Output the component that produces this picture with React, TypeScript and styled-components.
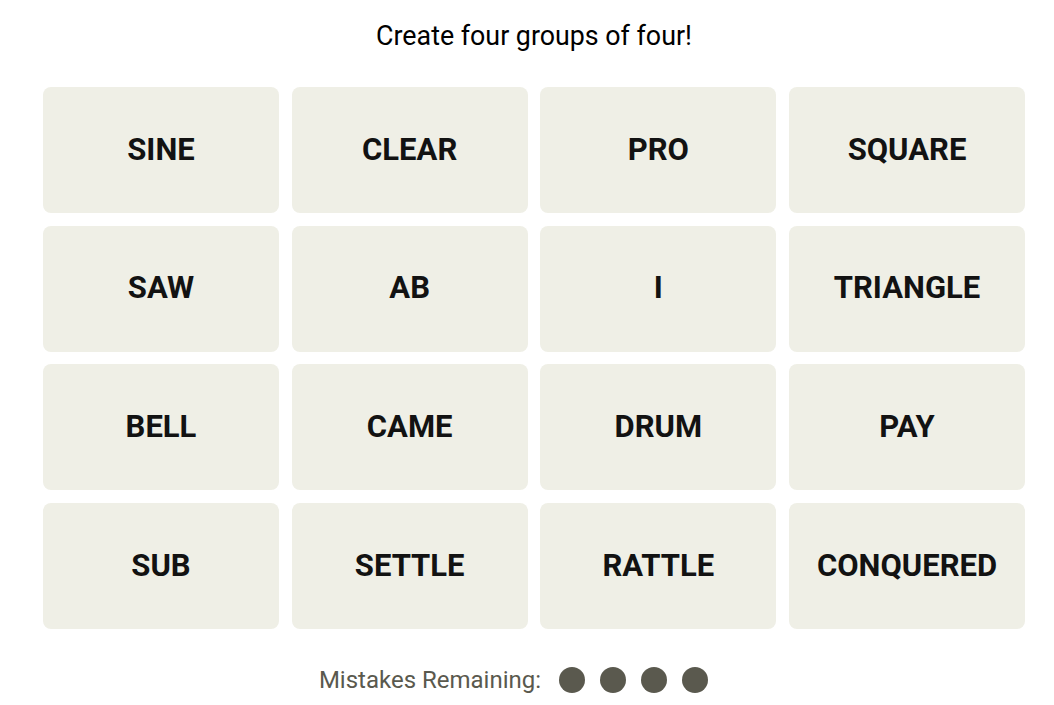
import { createGlobalStyle } from 'styled-components';
import styled from 'styled-components';

const GlobalStyle = createGlobalStyle`
  body {
    margin: 0;
    background: #ffffff;
    font-family: Roboto, "Liberation Sans", sans-serif;
    color: #121212;
  }
`;

const words = [
  'SINE', 'CLEAR', 'PRO', 'SQUARE',
  'SAW', 'AB', 'I', 'TRIANGLE',
  'BELL', 'CAME', 'DRUM', 'PAY',
  'SUB', 'SETTLE', 'RATTLE', 'CONQUERED',
];

const Board = styled.main`
  width: 982px;
  margin-left: 43px;
  display: flex;
  flex-direction: column;
  align-items: stretch;
`;

const Prompt = styled.p`
  margin: 21px 0 0;
  font-size: 26.8px;
  line-height: 30px;
  font-weight: 400;
  text-align: center;
  color: #000;
`;

const Grid = styled.section`
  margin-top: 36px;
  display: grid;
  grid-template-columns: repeat(4, 1fr);
  grid-auto-rows: 126px;
  gap: 12.7px;
`;

const Tile = styled.button`
  border: none;
  border-radius: 8px;
  background: #efefe6;
  color: #121212;
  font-family: Roboto, "Liberation Sans", sans-serif;
  font-size: 31px;
  font-weight: 700;
  text-transform: uppercase;
  display: flex;
  align-items: center;
  justify-content: center;
  padding: 0 0 2px;
  cursor: pointer;
`;

const Mistakes = styled.div`
  margin-top: 36px;
  display: flex;
  align-items: center;
  justify-content: center;
  padding-right: 41px;
  gap: 18px;
  color: #5a594e;
  font-size: 24px;
  line-height: 30px;
`;

const Dots = styled.div`
  display: flex;
  gap: 15px;
`;

const Dot = styled.span`
  width: 26px;
  height: 26px;
  border-radius: 50%;
  background: #5a594e;
`;

export default function App() {
  return (
    <>
      <GlobalStyle />
      <Board>
        <Prompt>Create four groups of four!</Prompt>
        <Grid>
          {words.map((w) => (
            <Tile key={w}>{w}</Tile>
          ))}
        </Grid>
        <Mistakes>
          <span>Mistakes Remaining:</span>
          <Dots>
            {[0, 1, 2, 3].map((i) => (
              <Dot key={i} />
            ))}
          </Dots>
        </Mistakes>
      </Board>
    </>
  );
}
